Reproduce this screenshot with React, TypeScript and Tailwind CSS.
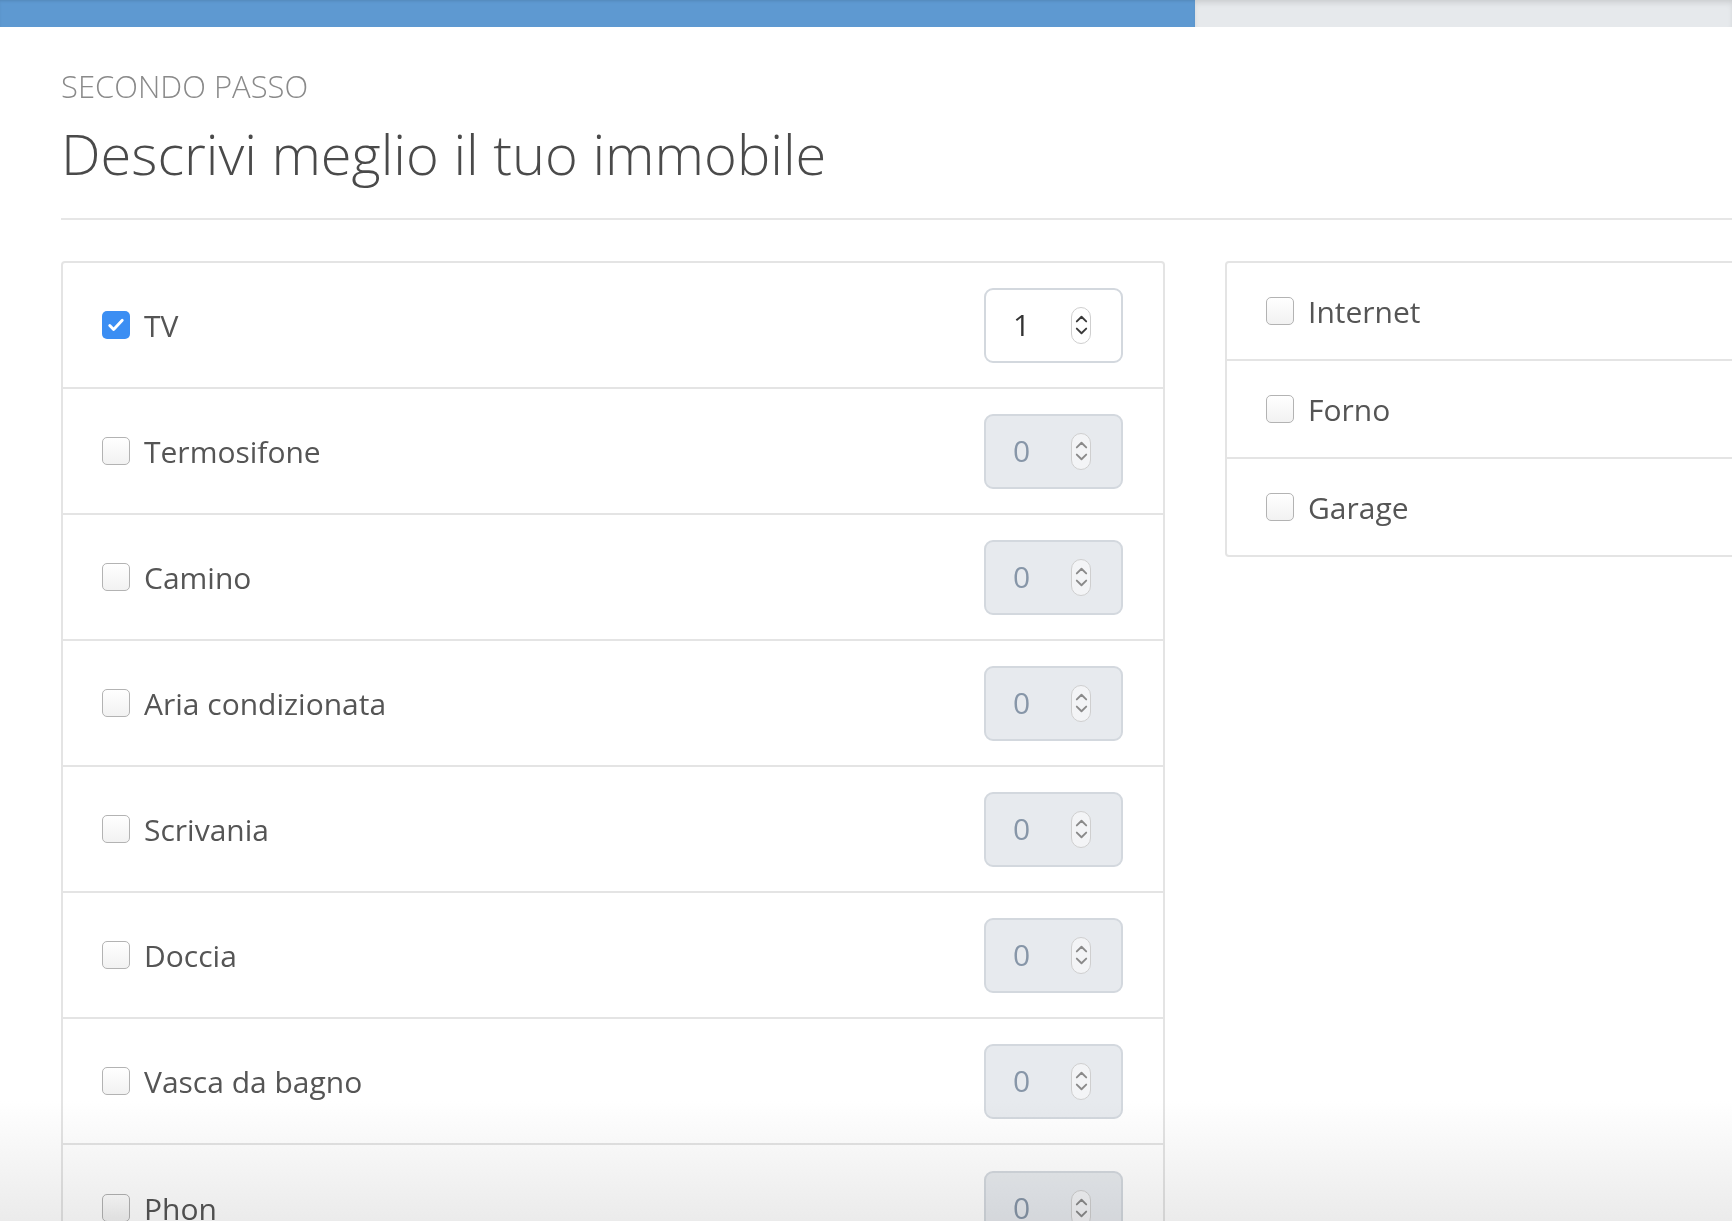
import React from 'react';

const counted = [
  { label: 'TV', checked: true, value: 1 },
  { label: 'Termosifone', checked: false, value: 0 },
  { label: 'Camino', checked: false, value: 0 },
  { label: 'Aria condizionata', checked: false, value: 0 },
  { label: 'Scrivania', checked: false, value: 0 },
  { label: 'Doccia', checked: false, value: 0 },
  { label: 'Vasca da bagno', checked: false, value: 0 },
  { label: 'Phon', checked: false, value: 0 },
];

const simple = ['Internet', 'Forno', 'Garage'];

function Box({ checked }: { checked: boolean }) {
  if (checked) {
    return (
      <span className="flex h-[28px] w-[28px] shrink-0 items-center justify-center rounded-[5px] bg-[#3b8ef3]">
        <svg width="20" height="20" viewBox="0 0 16 16" fill="none">
          <path d="M3 8.4l3.1 3.2L13 4.2" stroke="#fff" strokeWidth="2.3" strokeLinecap="round" strokeLinejoin="round" />
        </svg>
      </span>
    );
  }
  return (
    <span className="h-[28px] w-[28px] shrink-0 rounded-[5px] border-[1.5px] border-[#b3b3b3] bg-gradient-to-b from-white to-[#f2f2f2]" />
  );
}

function Spinner({ disabled }: { disabled: boolean }) {
  const c = disabled ? '#8a8a8a' : '#3a3a3a';
  return (
    <span className={`flex h-[37px] w-[20px] flex-col items-center justify-center gap-[4px] rounded-full border border-[#cfcfcf] ${disabled ? 'bg-[#f3f4f6]' : 'bg-white'}`}>
      <svg width="13" height="8" viewBox="0 0 13 8" fill="none">
        <path d="M1.8 6.4L6.5 1.8l4.7 4.6" stroke={c} strokeWidth="1.9" strokeLinecap="round" strokeLinejoin="round" />
      </svg>
      <svg width="13" height="8" viewBox="0 0 13 8" fill="none">
        <path d="M1.8 1.6l4.7 4.6 4.7-4.6" stroke={c} strokeWidth="1.9" strokeLinecap="round" strokeLinejoin="round" />
      </svg>
    </span>
  );
}

function NumberBox({ value, disabled }: { value: number; disabled: boolean }) {
  return (
    <div
      className={`flex h-[75px] w-[139px] items-center justify-between rounded-[9px] border-2 pl-[27px] pr-[30px] ${
        disabled ? 'border-[#d3d8de] bg-[#e7eaee] text-[#8796a8]' : 'border-[#d3d8de] bg-white text-[#333]'
      }`}
    >
      <span className="text-[30px] leading-none">{value}</span>
      <Spinner disabled={disabled} />
    </div>
  );
}

export default function App() {
  return (
    <div className="relative h-[1221px] overflow-hidden bg-white font-['Open_Sans',sans-serif] text-[#555]">
      {/* progress */}
      <div className="flex h-[27px]">
        <div className="w-[1195px] bg-[#5e99d1] shadow-[inset_0_2px_3px_-1px_rgba(0,0,0,0.12)]" />
        <div className="flex-1 bg-[#e6e9ec] shadow-[inset_0_4px_6px_-2px_rgba(0,0,0,0.14)]" />
      </div>

      <div className="pl-[61px]">
        <p className="mt-[42px] text-[31px] font-light leading-[34px] text-[#8a8a8a]">SECONDO PASSO</p>
        <h1 className="mt-[18px] text-[56px] font-light leading-[64px] text-[#4a4a4a]">
          Descrivi meglio il tuo immobile
        </h1>
        <div className="mt-[33px] h-[2px] bg-[#e6e6e6]" />

        <div className="mt-[41px] flex w-[2400px] items-start gap-[60px]">
          <div className="w-[1104px] rounded-[4px] border-2 border-[#e4e4e4] bg-white">
            {counted.map((r) => (
              <div
                key={r.label}
                className="flex h-[126px] items-center justify-between border-b-2 border-[#e4e4e4] pl-[39px] pr-[40px] last:border-b-0"
              >
                <label className="flex items-center gap-[14px] text-[30px] text-[#555]">
                  <Box checked={r.checked} />
                  {r.label}
                </label>
                <NumberBox value={r.value} disabled={!r.checked} />
              </div>
            ))}
          </div>

          <div className="w-[1104px] rounded-[4px] border-2 border-[#e4e4e4] bg-white">
            {simple.map((s) => (
              <div
                key={s}
                className="flex h-[98px] items-center border-b-2 border-[#e4e4e4] pl-[39px] last:h-[96px] last:border-b-0"
              >
                <label className="flex items-center gap-[14px] text-[30px] text-[#555]">
                  <Box checked={false} />
                  {s}
                </label>
              </div>
            ))}
          </div>
        </div>
      </div>

      {/* bottom fade */}
      <div className="pointer-events-none absolute inset-x-0 bottom-0 h-[120px] bg-gradient-to-b from-white to-[#ebebeb] mix-blend-multiply" />
    </div>
  );
}
